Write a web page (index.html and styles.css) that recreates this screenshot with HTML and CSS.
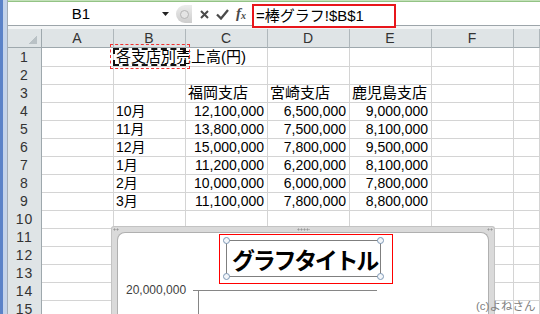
FILE: index.html
```html
<!DOCTYPE html>
<html lang="ja">

<head>
    <meta charset="UTF-8">
    <meta name="viewport" content="width=device-width, initial-scale=1.0">
    <title>棒グラフ</title>
    <link rel="stylesheet" href="styles.css">
</head>

<body>
    <div class="app">
        <div class="edge"></div>
        <div class="main">
            <div class="fbar">
                <div class="namebox">B1</div>
                <div class="nb-arrow">
                    <svg width="7" height="4" viewBox="0 0 7 4"><path d="M0 0h7L3.5 4z" fill="#222"/></svg>
                </div>
                <div class="tools">
                    <span class="knob"><span class="knob-dot"></span></span>
                    <svg class="ic-x" width="9" height="9" viewBox="0 0 9 9"><path d="M1 1l7 7M8 1L1 8" stroke="#4a4a4a" stroke-width="2"/></svg>
                    <svg class="ic-ok" width="13" height="11" viewBox="0 0 13 11"><path d="M1 5.5l4 4L12 1" stroke="#4a4a4a" stroke-width="2.3" fill="none"/></svg>
                    <span class="fx"><i>f</i><i class="fx-x">x</i></span>
                </div>
                <div class="formula">=棒グラフ!$B$1</div>
            </div>
            <div class="gap"></div>

            <div class="sheet">
                <div class="row hdr">
                    <div class="corner"></div><div>A</div><div>B</div><div>C</div><div>D</div><div>E</div><div>F</div><div></div>
                </div>
                <div class="row">
                    <div class="rh">1</div><div></div><div class="jp ov">各支店別売上高(円)</div><div></div><div></div><div></div><div></div><div></div>
                </div>
                <div class="row">
                    <div class="rh">2</div><div></div><div></div><div></div><div></div><div></div><div></div><div></div>
                </div>
                <div class="row">
                    <div class="rh">3</div><div></div><div></div><div class="jp">福岡支店</div><div class="jp">宮崎支店</div><div class="jp">鹿児島支店</div><div></div><div></div>
                </div>
                <div class="row">
                    <div class="rh">4</div><div></div><div>10月</div><div class="num">12,100,000</div><div class="num">6,500,000</div><div class="num">9,000,000</div><div></div><div></div>
                </div>
                <div class="row">
                    <div class="rh">5</div><div></div><div>11月</div><div class="num">13,800,000</div><div class="num">7,500,000</div><div class="num">8,100,000</div><div></div><div></div>
                </div>
                <div class="row">
                    <div class="rh">6</div><div></div><div>12月</div><div class="num">15,000,000</div><div class="num">7,800,000</div><div class="num">9,500,000</div><div></div><div></div>
                </div>
                <div class="row">
                    <div class="rh">7</div><div></div><div>1月</div><div class="num">11,200,000</div><div class="num">6,200,000</div><div class="num">8,100,000</div><div></div><div></div>
                </div>
                <div class="row">
                    <div class="rh">8</div><div></div><div>2月</div><div class="num">10,000,000</div><div class="num">6,000,000</div><div class="num">7,800,000</div><div></div><div></div>
                </div>
                <div class="row">
                    <div class="rh">9</div><div></div><div>3月</div><div class="num">11,100,000</div><div class="num">7,800,000</div><div class="num">8,800,000</div><div></div><div></div>
                </div>
                <div class="row">
                    <div class="rh">10</div><div></div><div></div><div></div><div></div><div></div><div></div><div></div>
                </div>
                <div class="row">
                    <div class="rh">11</div><div></div><div></div><div></div><div></div><div></div><div></div><div></div>
                </div>
                <div class="row">
                    <div class="rh">12</div><div></div><div></div><div></div><div></div><div></div><div></div><div></div>
                </div>
                <div class="row">
                    <div class="rh">13</div><div></div><div></div><div></div><div></div><div></div><div></div><div></div>
                </div>
                <div class="row">
                    <div class="rh">14</div><div></div><div></div><div></div><div></div><div></div><div></div><div></div>
                </div>
                <div class="row">
                    <div class="rh">15</div><div></div><div></div><div></div><div></div><div></div><div></div><div></div>
                </div>
            </div>
        </div>
    </div>

    <!-- copy selection on B1 -->
    <div class="copy-box"></div>
    <div class="ants"></div>

    <!-- embedded chart -->
    <div class="chart">
        <span class="grip grip-l"></span>
        <span class="grip grip-m"></span>
        <span class="grip grip-r"></span>
        <div class="chart-in">
            <div class="ctitle-row">
                <div class="ctitle-sel">
                    <div class="ctitle">
                        グラフタイトル
                        <span class="h h-tl"></span>
                        <span class="h h-tr"></span>
                        <span class="h h-bl"></span>
                        <span class="h h-br"></span>
                    </div>
                </div>
            </div>
            <div class="cplot">
                <div class="ylab">20,000,000</div>
                <div class="axis">
                    <div class="axis-v"></div>
                </div>
            </div>
        </div>
    </div>

    <div class="credit">(c)よねさん</div>
</body>

</html>
```

FILE: styles.css
```css
body {
    margin: 0;
    width: 540px;
    height: 314px;
    overflow: hidden;
    position: relative;
    background-color: #fff;
    font-family: "Liberation Sans", "Noto Sans CJK JP", sans-serif;
    font-size: 14px;
    color: #000;
}

.app {
    display: flex;
    height: 314px;
}

.edge {
    flex: none;
    width: 8px;
    background: linear-gradient(to right, #5b82c8 0 3px, #c4d3ea 3px 7px, #a2acb7 7px 8px);
}

.main {
    flex: 1;
    min-width: 0;
}

/* formula bar */
.fbar {
    display: flex;
    align-items: flex-start;
    height: 26px;
    box-sizing: border-box;
    border-bottom: 1px solid #9da5aa;
    background: linear-gradient(#c4e1ba 0 1px, #93c385 1px 2px, #fff 2px);
}

.namebox {
    width: 146px;
    height: 21px;
    margin-top: 3px;
    line-height: 21px;
    text-align: center;
    font-size: 15px;
}

.nb-arrow {
    display: flex;
    justify-content: center;
    align-items: center;
    width: 22px;
    height: 21px;
    margin-top: 3px;
}

.tools {
    display: flex;
    align-items: center;
    width: 76px;
    height: 18px;
    margin-top: 5px;
}

.knob {
    display: flex;
    justify-content: center;
    align-items: center;
    width: 16px;
    height: 18px;
    border-radius: 9px 0 0 9px;
    background: linear-gradient(#ececec, #cdcdcd);
}

.knob-dot {
    width: 7px;
    height: 7px;
    border-radius: 50%;
    background: #e4e4e4;
    border: 1px solid #b5b5b5;
}

.ic-x {
    margin-left: 8px;
}

.ic-ok {
    margin-left: 7px;
}

.fx {
    margin-left: 7px;
    font-family: "Liberation Serif", serif;
    font-size: 15px;
    font-weight: bold;
    color: #4a4a4a;
    line-height: 18px;
}

.fx-x {
    font-size: 10px;
    vertical-align: -1px;
}

.formula {
    position: relative;
    z-index: 1;
    width: 144px;
    height: 24px;
    margin-top: 4px;
    box-sizing: border-box;
    border: 2px solid #e8161b;
    background: #fff;
    padding-left: 2px;
    font-size: 15px;
    line-height: 20px;
    white-space: nowrap;
}

.gap {
    height: 3px;
    background: #f3f5f6;
}

/* sheet grid */
.row {
    display: grid;
    grid-template-columns: 34px 72px 72px 82px 82px 82px 82px 26px;
    height: 18px;
}

.row > div {
    box-sizing: border-box;
    border-right: 1px solid #d4d4d4;
    border-bottom: 1px solid #d4d4d4;
    padding: 0 3px 0 2px;
    line-height: 18px;
    white-space: nowrap;
}

.row.hdr {
    height: 19px;
}

.row.hdr > div {
    background: #dfe4e6;
    border-right-color: #afb7bb;
    border-bottom-color: #9ea8ad;
    text-align: center;
    color: #333;
}

.row.hdr > .corner {
    border-right-color: #9ea8ad;
    background: #dfe4e6 linear-gradient(to bottom right, transparent 50%, #b9c1c5 50%) no-repeat right 4px bottom 3px / 8px 8px;
}

.row > .rh {
    background: #dfe4e6;
    border-right-color: #9ea8ad;
    border-bottom-color: #bac1c5;
    text-align: center;
    color: #333;
    letter-spacing: 1px;
    padding: 0;
}

.num {
    text-align: right;
}

.jp {
    font-size: 15px;
}

.row > .ov {
    border-right-color: transparent;
}

/* copy marquee on B1 */
.copy-box {
    position: absolute;
    left: 110px;
    top: 44px;
    width: 80px;
    height: 25px;
    box-sizing: border-box;
    border: 1px dashed #f03030;
}

.ants {
    position: absolute;
    left: 113px;
    top: 48px;
    width: 73px;
    height: 18px;
    box-sizing: border-box;
    border: 2px dashed #111;
}

/* chart */
.chart {
    position: absolute;
    left: 111px;
    top: 226px;
    width: 384px;
    height: 100px;
    box-sizing: border-box;
    padding: 5px 5px 0;
    background: #dadada;
    border: 1px solid #c3c3c3;
    border-bottom: none;
    border-radius: 3px 3px 0 0;
}

.grip {
    position: absolute;
    top: 1px;
    height: 3px;
    background-image: radial-gradient(#9a9a9a 45%, transparent 50%);
    background-size: 3px 3px;
}

.grip-l {
    left: 1px;
    width: 6px;
}

.grip-m {
    left: 185px;
    width: 13px;
}

.grip-r {
    right: 1px;
    width: 6px;
}

.chart-in {
    height: 100%;
    background: #fff;
    border: 1px solid #b0b0b0;
    border-bottom: none;
    border-radius: 8px 8px 0 0;
}

.ctitle-row {
    padding: 1px 0 0 101px;
}

.ctitle-sel {
    width: 174px;
    height: 50px;
    box-sizing: border-box;
    border: 1px solid #f00;
    padding: 5px 0 0 6px;
}

.ctitle {
    position: relative;
    display: flex;
    justify-content: center;
    align-items: center;
    width: 155px;
    height: 37px;
    box-sizing: border-box;
    border: 1px solid #7f7f7f;
    padding-left: 2px;
    font-family: "Noto Sans CJK JP", sans-serif;
    font-weight: bold;
    font-size: 23px;
    letter-spacing: -2.3px;
    white-space: nowrap;
}

.h {
    position: absolute;
    width: 7px;
    height: 7px;
    box-sizing: border-box;
    border: 1px solid #7d98b5;
    border-radius: 50%;
    background: #f3f6fa;
}

.h-tl { left: -4px; top: -4px; }
.h-tr { right: -4px; top: -4px; }
.h-bl { left: -4px; bottom: -4px; }
.h-br { right: -4px; bottom: -4px; }

.cplot {
    display: flex;
    align-items: flex-start;
    padding-left: 8px;
}

.ylab {
    width: 60px;
    text-align: right;
    font-size: 12px;
    line-height: 13px;
    color: #404040;
}

.axis {
    width: 184px;
    margin: 6px 0 0 7px;
    border-top: 1px solid #868686;
}

.axis-v {
    height: 40px;
    margin-left: 5px;
    border-left: 1px solid #868686;
}

.credit {
    position: absolute;
    left: 476px;
    top: 299px;
    font-size: 11.5px;
    line-height: 14px;
    color: #808080;
}
```
